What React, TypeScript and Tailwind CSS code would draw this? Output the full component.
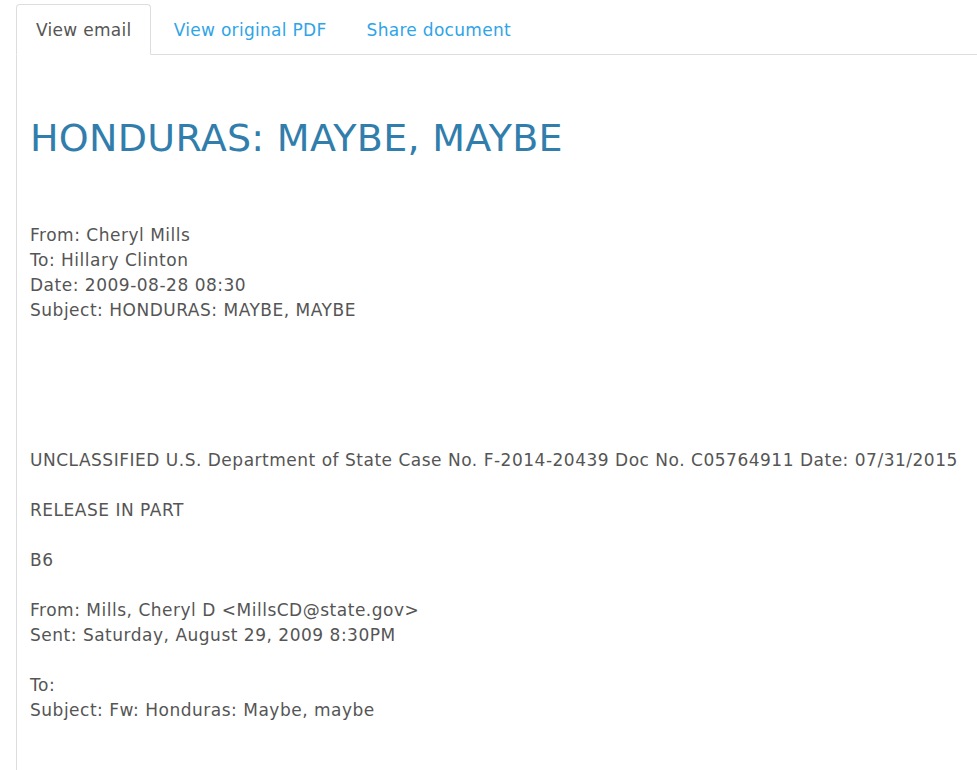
import React from "react";

const lines: string[] = [
  "From: Cheryl Mills",
  "To: Hillary Clinton",
  "Date: 2009-08-28 08:30",
  "Subject: HONDURAS: MAYBE, MAYBE",
  "",
  "",
  "",
  "",
  "",
  "UNCLASSIFIED U.S. Department of State Case No. F-2014-20439 Doc No. C05764911 Date: 07/31/2015",
  "",
  "RELEASE IN PART",
  "",
  "B6",
  "",
  "From: Mills, Cheryl D <MillsCD@state.gov>",
  "Sent: Saturday, August 29, 2009 8:30PM",
  "",
  "To:",
  "Subject: Fw: Honduras: Maybe, maybe",
  "",
  "",
];

export default function App() {
  return (
    <div
      className="min-h-[770px] bg-white pl-4 pt-1 overflow-hidden"
      style={{ fontFamily: '"DejaVu Sans", Verdana, sans-serif' }}
    >
      <ul className="flex border-b border-[#dddddd]">
        <li className="-mb-px mr-[2px]">
          <span className="block rounded-t-[4px] border border-[#dddddd] border-b-white bg-white pl-[19px] pr-[18px] pt-[13px] pb-[11px] text-[17px] leading-[25px] tracking-[0.3px] text-[#555555]">
            View email
          </span>
        </li>
        <li className="-mb-px mr-[2px]">
          <a className="block border border-transparent pl-[20px] pr-[17px] pt-[13px] pb-[11px] text-[17px] leading-[25px] tracking-[0.3px] text-[#2fa4e7]">
            View original PDF
          </a>
        </li>
        <li className="-mb-px mr-[2px]">
          <a className="block border border-transparent pl-[19px] pr-[17px] pt-[13px] pb-[11px] text-[17px] leading-[25px] tracking-[0.3px] text-[#2fa4e7]">
            Share document
          </a>
        </li>
      </ul>
      <div className="border-l border-[#dddddd] pl-[13px] pt-[62px] min-h-[720px]">
        <h1 className="text-[38px] leading-[42px] tracking-[0.3px] text-[#317eac] font-normal">
          HONDURAS: MAYBE, MAYBE
        </h1>
        <div className="mt-[64px] text-[17px] leading-[25px] tracking-[0.51px] text-[#555555] whitespace-nowrap">
          {lines.map((l, i) => (
            <div key={i} className="h-[25px]">
              {l}
            </div>
          ))}
        </div>
      </div>
    </div>
  );
}
